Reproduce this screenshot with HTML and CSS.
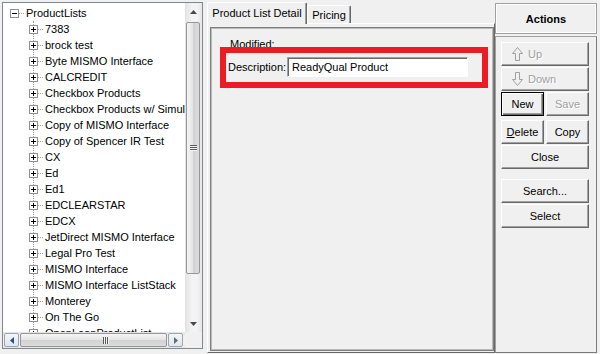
FILE: index.html
```html
<!DOCTYPE html>
<html lang="en">
<head>
  <meta charset="UTF-8">
  <meta name="viewport" content="width=device-width, initial-scale=1.0">
  <title>Product Lists</title>
  <link rel="stylesheet" href="styles.css">
</head>
<body>

  <!-- left: product list tree -->
  <div class="tree-box">
    <div class="tree">
      <div class="node root"><span class="exp minus"></span><span class="dots"></span><span>ProductLists</span></div>
      <div class="children">
        <div class="node"><span class="exp"></span><span class="dots"></span><span>7383</span></div>
        <div class="node"><span class="exp"></span><span class="dots"></span><span>brock test</span></div>
        <div class="node"><span class="exp"></span><span class="dots"></span><span>Byte MISMO Interface</span></div>
        <div class="node"><span class="exp"></span><span class="dots"></span><span>CALCREDIT</span></div>
        <div class="node"><span class="exp"></span><span class="dots"></span><span>Checkbox Products</span></div>
        <div class="node"><span class="exp"></span><span class="dots"></span><span>Checkbox Products w/ Simulator</span></div>
        <div class="node"><span class="exp"></span><span class="dots"></span><span>Copy of MISMO Interface</span></div>
        <div class="node"><span class="exp"></span><span class="dots"></span><span>Copy of Spencer IR Test</span></div>
        <div class="node"><span class="exp"></span><span class="dots"></span><span>CX</span></div>
        <div class="node"><span class="exp"></span><span class="dots"></span><span>Ed</span></div>
        <div class="node"><span class="exp"></span><span class="dots"></span><span>Ed1</span></div>
        <div class="node"><span class="exp"></span><span class="dots"></span><span>EDCLEARSTAR</span></div>
        <div class="node"><span class="exp"></span><span class="dots"></span><span>EDCX</span></div>
        <div class="node"><span class="exp"></span><span class="dots"></span><span>JetDirect MISMO Interface</span></div>
        <div class="node"><span class="exp"></span><span class="dots"></span><span>Legal Pro Test</span></div>
        <div class="node"><span class="exp"></span><span class="dots"></span><span>MISMO Interface</span></div>
        <div class="node"><span class="exp"></span><span class="dots"></span><span>MISMO Interface ListStack</span></div>
        <div class="node"><span class="exp"></span><span class="dots"></span><span>Monterey</span></div>
        <div class="node"><span class="exp"></span><span class="dots"></span><span>On The Go</span></div>
        <div class="node"><span class="exp"></span><span class="dots"></span><span>OpenLoanProductList</span></div>
      </div>
    </div>

    <div class="vscroll">
      <div class="arrow"><svg width="7" height="4"><polygon points="3.5,0 7,4 0,4" fill="#4a4a4a"/></svg></div>
      <div class="vtrack"><div class="vthumb"><span class="vgrip"></span></div></div>
      <div class="arrow"><svg width="7" height="4"><polygon points="0,0 7,0 3.5,4" fill="#4a4a4a"/></svg></div>
    </div>

    <div class="hscroll">
      <div class="hbtn"><svg width="4" height="7"><polygon points="4,0 4,7 0,3.5" fill="#2d4f7a"/></svg></div>
      <div class="hthumb"><span class="hgrip"></span></div>
      <div class="hbtn"><svg width="4" height="7"><polygon points="0,0 4,3.5 0,7" fill="#6a6a6a"/></svg></div>
    </div>
    <div class="corner"></div>
  </div>

  <!-- middle: detail tabs -->
  <div class="tabs">
    <div class="tab-strip">
      <div class="tab active">Product List Detail</div>
      <div class="tab">Pricing</div>
    </div>
    <div class="page">
      <div class="detail">
        <div class="modified">Modified:</div>
        <div class="field">
          <label for="description">Description:</label>
          <input type="text" id="description" value="ReadyQual Product">
        </div>
        <div class="highlight"></div>
      </div>
    </div>
  </div>

  <!-- right: actions -->
  <div class="actions">
    <div class="actions-head">Actions</div>
    <div class="actions-body">
      <div class="btn icon disabled">
        <svg width="11" height="14"><polygon points="5.5,0.5 10.5,6.5 7.5,6.5 7.5,13.5 3.5,13.5 3.5,6.5 0.5,6.5" fill="none" stroke="#a0a0a0"/></svg>
        <span>Up</span>
      </div>
      <div class="btn icon disabled">
        <svg width="11" height="14"><polygon points="3.5,0.5 7.5,0.5 7.5,7.5 10.5,7.5 5.5,13.5 0.5,7.5 3.5,7.5" fill="none" stroke="#a0a0a0"/></svg>
        <span>Down</span>
      </div>
      <div class="btn-row">
        <div class="btn default">New</div>
        <div class="btn disabled">Save</div>
      </div>
      <div class="btn-row gap-small">
        <div class="btn"><span><u>D</u>elete</span></div>
        <div class="btn">Copy</div>
      </div>
      <div class="btn">Close</div>
      <div class="btn gap-large">Search...</div>
      <div class="btn">Select</div>
    </div>
  </div>

</body>
</html>
```

FILE: styles.css
```css
* {
  box-sizing: border-box;
}
body {
  margin: 0;
  width: 600px;
  height: 354px;
  overflow: hidden;
  background: #f0f0f0;
  font-family: 'Liberation Sans', Arial, sans-serif;
  font-size: 11px;
  color: #000;
  display: flex;
  align-items: flex-start;
}

/* tree */
.tree-box {
  margin: 2px 0 0 2px;
  width: 201px;
  height: 347px;
  border: 1px solid #828790;
  background: #fff;
  display: grid;
  grid-template-columns: 182px 17px;
  grid-template-rows: 329px 16px;
  flex: none;
}
.tree {
  overflow: hidden;
  padding-top: 2px;
  white-space: nowrap;
}
.node {
  display: flex;
  align-items: center;
  height: 16px;
}
.root {
  padding-left: 7px;
}
.children {
  margin-left: 30px;
  border-left: 1px dotted #a0a0a0;
}
.children .node {
  margin-left: -5px;
}
.exp {
  flex: none;
  width: 9px;
  height: 9px;
  border: 1px solid #919191;
  background:
    linear-gradient(#000, #000) center / 5px 1px no-repeat,
    linear-gradient(#000, #000) center / 1px 5px no-repeat,
    #fff;
}
.exp.minus {
  background: linear-gradient(#000, #000) center / 5px 1px no-repeat, #fff;
}
.dots {
  flex: none;
  width: 5px;
  margin-right: 2px;
  border-top: 1px dotted #a0a0a0;
}

/* scrollbars */
.vscroll {
  display: flex;
  flex-direction: column;
  background: linear-gradient(to right, #e2e2e2, #f3f3f3 40%, #f3f3f3 70%, #e6e6e6);
}
.vscroll .arrow {
  height: 17px;
  flex: none;
  display: flex;
  align-items: center;
  justify-content: center;
}
.vtrack {
  flex: 1;
  padding: 2px 0 0 1px;
}
.vthumb {
  width: 14px;
  height: 252px;
  border: 1px solid #969696;
  border-radius: 2px;
  background: linear-gradient(to right, #f5f5f5, #e4e4e4 50%, #d3d3d3 51%, #dcdcdc);
  display: flex;
  align-items: center;
  justify-content: center;
}
.vgrip {
  width: 7px;
  height: 6px;
  background: repeating-linear-gradient(#585858 0 1px, #f4f4f4 1px 2px);
}
.hscroll {
  display: flex;
  align-items: center;
  gap: 1px;
  padding: 0 2px 0 1px;
  background: linear-gradient(#e2e2e2, #f3f3f3 40%, #f3f3f3 70%, #e6e6e6);
}
.hbtn {
  flex: none;
  width: 15px;
  height: 14px;
  border: 1px solid #9aa5b3;
  border-radius: 2px;
  background: linear-gradient(#f3f6fa, #dfe7f0);
  display: flex;
  align-items: center;
  justify-content: center;
}
.hthumb {
  flex: 1;
  height: 14px;
  border: 1px solid #969696;
  border-radius: 2px;
  background: linear-gradient(#f5f5f5, #e4e4e4 50%, #d3d3d3 51%, #dcdcdc);
  display: flex;
  align-items: center;
  justify-content: center;
  padding-left: 24px;
}
.hgrip {
  width: 6px;
  height: 7px;
  background: repeating-linear-gradient(to right, #585858 0 1px, #f4f4f4 1px 2px);
}
.corner {
  background: #f0f0f0;
}

/* tabs */
.tabs {
  margin-left: 4px;
  width: 288px;
  height: 354px;
  display: flex;
  flex-direction: column;
  flex: none;
}
.tab-strip {
  margin-top: 2px;
  height: 21px;
  display: flex;
  align-items: flex-end;
  flex: none;
}
.tab {
  width: 44px;
  height: 18px;
  line-height: 18px;
  text-align: center;
  border: 1px solid;
  border-color: #fff #696969 transparent #fff;
  border-bottom: none;
  border-radius: 2px 2px 0 0;
  box-shadow: inset -1px 0 #a0a0a0;
}
.tab.active {
  width: 100px;
  height: 22px;
  line-height: 20px;
  margin-bottom: -1px;
  background: #f0f0f0;
  z-index: 1;
}
.page {
  flex: 1;
  margin-bottom: 1px;
  border: 1px solid;
  border-color: #fff #696969 #696969 #fff;
  display: flex;
  flex-direction: column;
}
.detail {
  position: relative;
  flex: 1;
  margin: 3px 0 1px 2px;
  border: 1px solid #7f7f7f;
  box-shadow: inset 1px 1px #b9b9b9, inset -1px -1px #b9b9b9;
}
.modified {
  padding: 9px 0 0 19px;
  line-height: 14px;
}
.field {
  margin-top: 6px;
  padding-left: 17px;
  display: flex;
  align-items: center;
}
.field label {
  width: 59px;
}
.field input {
  width: 181px;
  height: 20px;
  margin: 0;
  padding: 0 0 0 4px;
  border: 1px solid;
  border-color: #a0a0a0 #fff #fff #a0a0a0;
  box-shadow: inset 1px 1px #696969;
  background: #fff;
  font: inherit;
  color: #000;
  outline: none;
}
.highlight {
  position: absolute;
  left: 9px;
  top: 19px;
  width: 268px;
  height: 41px;
  border: 6px solid #ed1c24;
  pointer-events: none;
}

/* actions */
.actions {
  width: 102px;
  height: 354px;
  display: flex;
  flex-direction: column;
  flex: none;
}
.actions-head {
  margin-top: 3px;
  height: 31px;
  flex: none;
  border: 1px solid #a0a0a0;
  box-shadow: inset 1px 1px #fff, inset -1px -1px #fff;
  font-weight: bold;
  display: flex;
  align-items: center;
  justify-content: center;
}
.actions-body {
  flex: 1;
  margin: 2px 0 1px;
  padding: 5px 7px 0 5px;
  border: 1px solid;
  border-color: #a0a0a0 #7a7a7a #7a7a7a #a0a0a0;
  display: flex;
  flex-direction: column;
  gap: 1px;
}
.btn {
  height: 24px;
  flex: none;
  background: #f0f0f0;
  border: 1px solid;
  border-color: #fff #696969 #696969 #fff;
  box-shadow: inset -1px -1px #a0a0a0;
  display: flex;
  align-items: center;
  justify-content: center;
}
.btn.icon {
  justify-content: flex-start;
  padding-left: 10px;
  gap: 5px;
}
.btn.disabled {
  color: #a0a0a0;
  text-shadow: 1px 1px 0 #fff;
}
.btn.default {
  border-color: #000;
  box-shadow: inset 1px 1px #fff, inset -1px -1px #696969, inset -2px -2px #a0a0a0;
}
.btn-row {
  display: grid;
  grid-template-columns: 1fr 1fr;
  gap: 2px;
}
.gap-small {
  margin-top: 3px;
}
.gap-large {
  margin-top: 9px;
}
```
